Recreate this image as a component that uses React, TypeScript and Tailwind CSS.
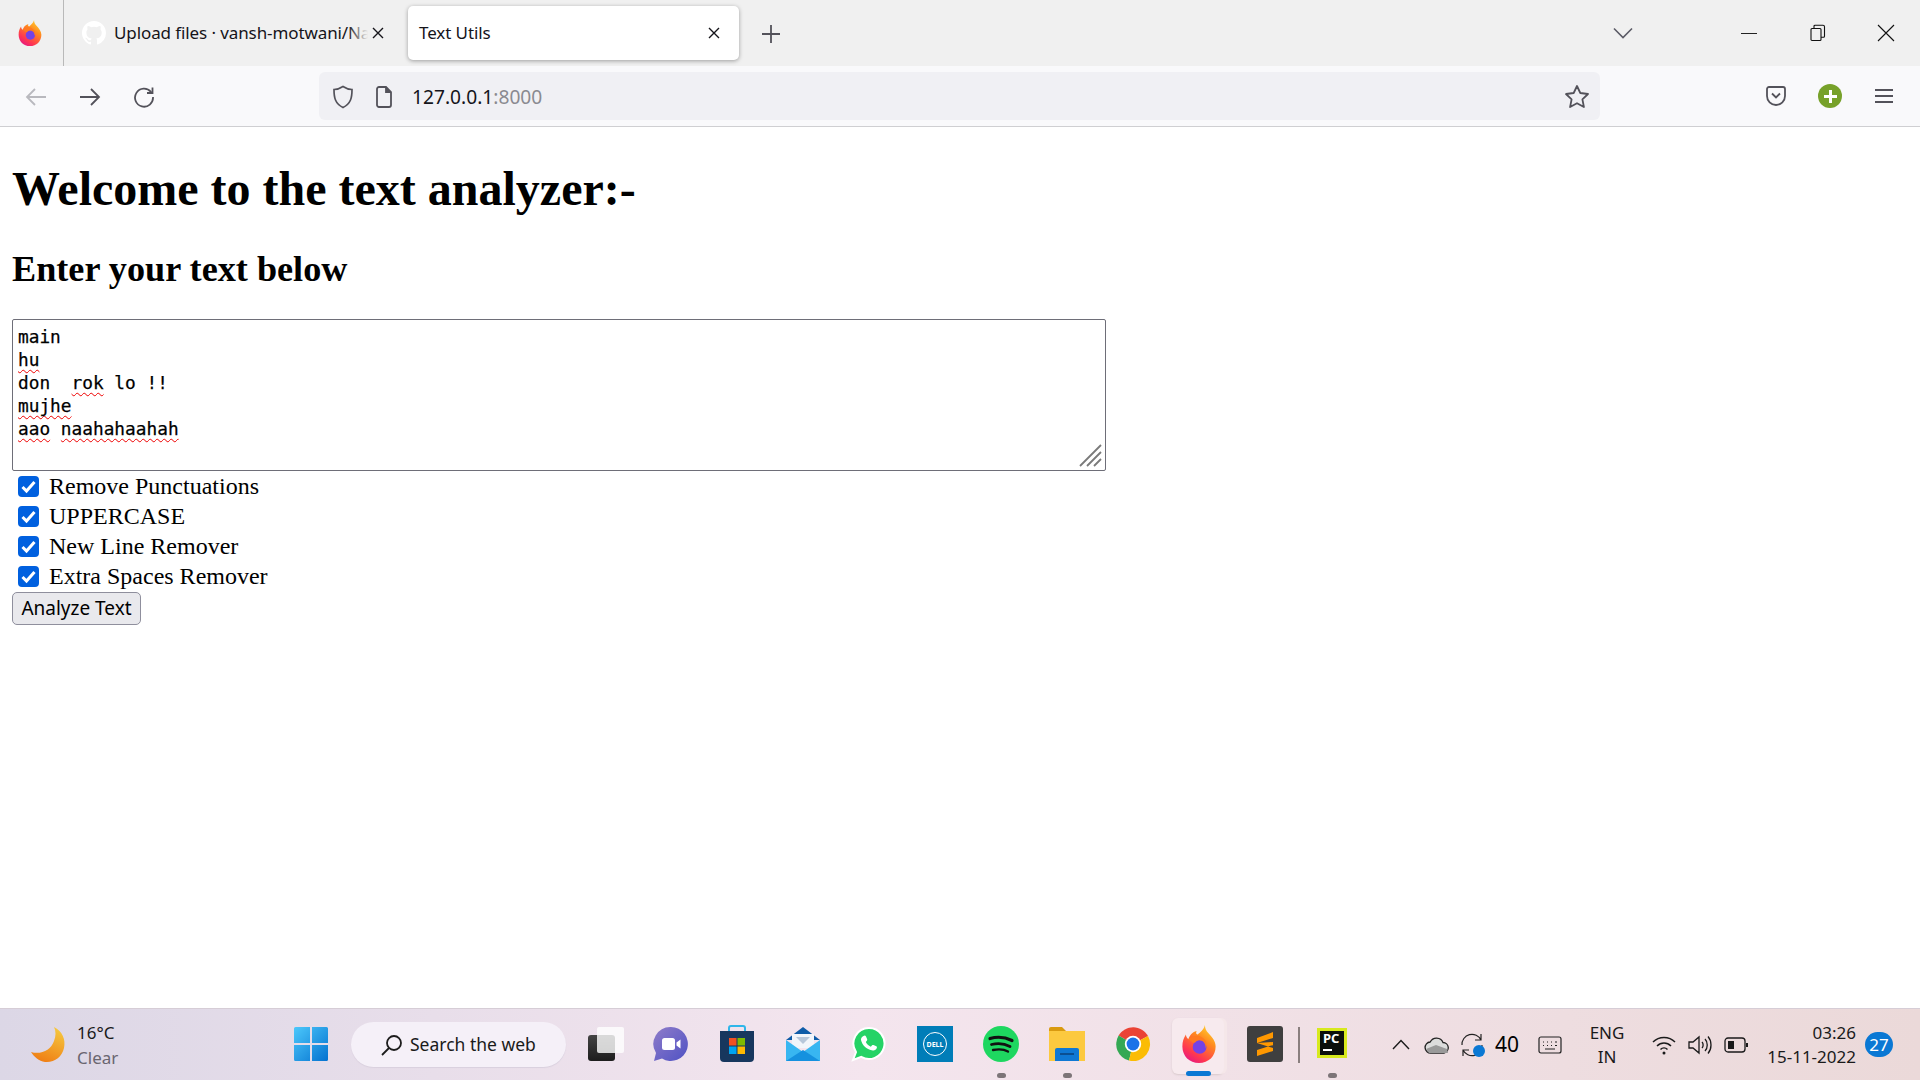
import React from "react";

const ui = "font-['Noto_Sans','Open_Sans',sans-serif]";

function Firefox({ s = 24 }: { s?: number }) {
  const id = "ff" + s;
  return (
    <svg width={s} height={s} viewBox="0 0 32 32">
      <defs>
        <linearGradient id={id} x1="0.8" y1="0" x2="0.2" y2="1">
          <stop offset="0" stopColor="#ffd52e" />
          <stop offset="0.35" stopColor="#ff8a1f" />
          <stop offset="0.75" stopColor="#ff3750" />
          <stop offset="1" stopColor="#e31587" />
        </linearGradient>
      </defs>
      <path d="M21 0c0 3 1 5 3 7 3 3 6 7 6 11 0 8-6 14-14 14S2 26 2 18c0-4 1-7 3-10 0 2 1 3 2 4 1-3 3-6 7-7-1 2 0 3 1 3 2-2 5-4 6-8z" fill={`url(#${id})`} />
      <circle cx="16.5" cy="18.500" r="5.800" fill="#7542e5" />
      <path d="M7 12c3-3 8-4 11-2 4 2 5.500 6 3.500 9.500 .5-4.500-3-7.500-6.500-6.500-2 1-2 2-4 2l-4-3z" fill="#ff7a1f" />
    </svg>
  );
}

function Chrome() {
  return (
    <svg width="36" height="36" viewBox="0 0 36 36">
      <path d="M18 18 L3.6 9.5 A17 17 0 0 1 33 10 Z" fill="#ea4335" />
      <path d="M18 18 L3.6 9.5 A17 17 0 0 0 14 34.6 Z" fill="#34a853" />
      <path d="M18 18 L33 10 A17 17 0 0 1 14 34.6 Z" fill="#fbbc04" />
      <circle cx="18" cy="18" r="8.2" fill="#fff" />
      <circle cx="18" cy="18" r="6.4" fill="#1a73e8" />
    </svg>
  );
}

function TaskIcon({ children, dot, active }: { children: React.ReactNode; dot?: boolean; active?: boolean }) {
  return (
    <div className="relative w-[66px] h-[71px] shrink-0 flex items-center justify-center">
      {active && <div className="absolute left-[6px] top-[9px] w-[52px] h-[56px] rounded-md bg-[#f7eaee] shadow-[3px_0_0_#f5e7e9,0_1px_2px_#d9c9cc]" />}
      <div className="relative -mt-[1px]">{children}</div>
      {dot && <div className="absolute bottom-[2px] left-[29px] w-[9px] h-[5px] rounded-full bg-[#7d7578]" />}
      {active && <div className="absolute bottom-[4px] left-[20px] w-[25px] h-[5px] rounded-full bg-[#0a78d4]" />}
    </div>
  );
}

function Sp({ children }: { children: React.ReactNode }) {
  return <span className="underline decoration-wavy decoration-[#ee0000] decoration-1 underline-offset-[3px] [text-decoration-skip-ink:none]">{children}</span>;
}

export default function App() {
  return (
    <div className="h-screen w-full flex flex-col bg-white overflow-hidden">
      {/* tab strip */}
      <div className={`${ui} h-[66px] shrink-0 bg-[#f0f0f0] flex items-start text-[#15141a]`}>
        <div className="w-[64px] h-full shrink-0 flex items-center justify-center pr-[4px] border-r border-[#b9b9b9]">
          <Firefox s={26} />
        </div>
        <div className="w-[344px] h-full flex items-center pl-[18px] shrink-0">
          <svg width="24" height="24" viewBox="0 0 16 16" className="shrink-0" fill="#ffffff">
            <path d="M8 0C3.58 0 0 3.58 0 8c0 3.54 2.29 6.53 5.47 7.59.4.07.55-.17.55-.38v-1.34c-2.23.48-2.69-1.07-2.69-1.07-.36-.92-.89-1.17-.89-1.17-.73-.5.05-.49.05-.49.8.06 1.23.83 1.23.83.71 1.22 1.87.87 2.33.66.07-.52.28-.87.5-1.07-1.78-.2-3.64-.89-3.64-3.95 0-.87.31-1.59.82-2.15-.08-.2-.36-1.02.08-2.12 0 0 .67-.21 2.2.82a7.7 7.7 0 0 1 4 0c1.53-1.04 2.2-.82 2.2-.82.44 1.1.16 1.92.08 2.12.51.56.82 1.27.82 2.15 0 3.07-1.87 3.75-3.65 3.95.29.25.54.73.54 1.48v2.2c0 .21.15.46.55.38A8.01 8.01 0 0 0 16 8c0-4.42-3.58-8-8-8z" />
          </svg>
          <div className="relative ml-[8px] w-[254px] overflow-hidden whitespace-nowrap text-[17px] tracking-[-0.1px] leading-[24px]">
            Upload files · vansh-motwani/Na
            <div className="absolute right-0 top-0 h-full w-[20px] bg-gradient-to-r from-transparent to-[#f0f0f0]" />
          </div>
          <svg width="14" height="14" viewBox="0 0 14 14" className="ml-[3px]" stroke="#15141a" strokeWidth="1.4"><path d="M2 2l10 10M12 2L2 12" /></svg>
        </div>
        <div className="w-[331px] h-[54px] mt-[6px] shrink-0 bg-white rounded-[5px] shadow-[0_1px_4px_rgba(0,0,0,0.35)] flex items-center justify-between pl-[11px] pr-[18px] text-[17px] tracking-[-0.1px]">
          <span>Text Utils</span>
          <svg width="14" height="14" viewBox="0 0 14 14" stroke="#15141a" strokeWidth="1.4"><path d="M2 2l10 10M12 2L2 12" /></svg>
        </div>
        <div className="w-[64px] h-full flex items-center justify-center shrink-0 pt-[2px]">
          <svg width="20" height="20" viewBox="0 0 20 20" stroke="#53525a" strokeWidth="1.8"><path d="M10 1v18M1 10h18" /></svg>
        </div>
        <div className="flex-1 h-full flex items-center justify-end">
          <svg width="20" height="12" viewBox="0 0 20 12" fill="none" stroke="#5b5b66" strokeWidth="1.6" className="mr-[108px]"><path d="M1 1.5l9 9 9-9" /></svg>
          <div className="w-[16px] h-[1px] bg-[#222] mr-[53px]" />
          <svg width="16" height="18" viewBox="0 0 16 18" fill="none" stroke="#111" strokeWidth="1.1" className="mr-[51px]"><rect x="1" y="4.5" width="10" height="12" rx="1" /><path d="M4 4.5V2.2a1 1 0 0 1 1-1h8a1.5 1.5 0 0 1 1.5 1.5v9.5a1 1 0 0 1-1 1H11" /></svg>
          <svg width="18" height="18" viewBox="0 0 18 18" stroke="#111" strokeWidth="1.1" className="mr-[25px]"><path d="M1 1l16 16M17 1L1 17" /></svg>
        </div>
      </div>

      {/* toolbar */}
      <div className={`${ui} h-[61px] shrink-0 bg-[#f9f9fb] border-b border-[#cfcfd2] flex items-start text-[#15141a]`}>
        <div className="w-[319px] h-[60px] shrink-0 flex items-center pl-[25px] pt-[2px]">
          <svg width="22" height="20" viewBox="0 0 22 20" fill="none" stroke="#b9b9be" strokeWidth="1.8"><path d="M21 10H2M10 2l-8 8 8 8" /></svg>
          <svg width="22" height="20" viewBox="0 0 22 20" fill="none" stroke="#53525a" strokeWidth="1.8" className="ml-[32px]"><path d="M1 10h19M12 2l8 8-8 8" /></svg>
          <svg width="22" height="22" viewBox="0 0 22 22" fill="none" stroke="#53525a" strokeWidth="1.8" className="ml-[32px]"><path d="M18 6a9 9 0 1 0 2 5M19.5 1.5V7H14" /></svg>
        </div>
        <div className="w-[1281px] h-[48px] mt-[6px] shrink-0 rounded-md bg-[#f0f0f4] flex items-center pl-[13px] pr-[10px] pt-[2px]">
          <svg width="22" height="24" viewBox="0 0 22 24" fill="none" stroke="#53525a" strokeWidth="1.7"><path d="M11 1.5c3 2 6 3 9 3 0 8-1 14-9 18C3 18.500 2 12.500 2 4.500c3 0 6-1 9-3z" /></svg>
          <svg width="18" height="22" viewBox="0 0 18 22" fill="none" stroke="#53525a" strokeWidth="1.8" className="ml-[21px]"><path d="M2 3a2 2 0 0 1 2-2h7l5 5v13a2 2 0 0 1-2 2H4a2 2 0 0 1-2-2z" /><path d="M11 1v5h5" fill="#53525a" /></svg>
          <span className="ml-[19px] text-[19.200px] leading-none">127.0.0.1<span className="text-[#8a8a90]">:8000</span></span>
          <svg width="26" height="26" viewBox="0 0 26 26" fill="none" stroke="#53525a" strokeWidth="1.8" className="ml-auto"><path d="M13 2l3.300 7 7.700 1-5.600 5.300 1.500 7.700-6.900-3.800L6.100 23l1.500-7.700L2 10l7.700-1z" strokeLinejoin="round" /></svg>
        </div>
        <div className="flex-1 h-[60px] flex items-center pl-[165px]">
          <svg width="22" height="22" viewBox="0 0 22 22" fill="none" stroke="#53525a" strokeWidth="1.8"><path d="M2 4a2 2 0 0 1 2-2h14a2 2 0 0 1 2 2v7a9 9 0 0 1-18 0z" /><path d="M7 8.500l4 4 4-4" /></svg>
          <div className="ml-[31px] w-[24px] h-[24px] rounded-full bg-[#77a12a] flex items-center justify-center">
            <svg width="13" height="13" viewBox="0 0 13 13" stroke="#fff" strokeWidth="3"><path d="M6.500 0v13M0 6.500h13" /></svg>
          </div>
          <svg width="20" height="18" viewBox="0 0 20 18" stroke="#53525a" strokeWidth="1.8" className="ml-[32px]"><path d="M1 3h18M1 9h18M1 15h18" /></svg>
        </div>
      </div>

      {/* page */}
      <main className="flex-1 min-h-0 px-[12px] font-['Liberation_Serif',serif] text-black">
        <h1 className="mt-[34px] text-[48px] leading-[56px] font-bold">Welcome to the text analyzer:-</h1>
        <h2 className="mt-[32px] text-[36.200px] leading-[40px] font-bold">Enter your text below</h2>
        <div className="relative mt-[30px] w-[1094px] h-[152px] border border-[#6e6e78] rounded-[2px] px-[5px] py-[5px] font-['DejaVu_Sans_Mono',monospace] text-[17.800px] leading-[23px] whitespace-pre [-webkit-text-stroke:0.25px_#000]">
          <div>main</div>
          <div><Sp>hu</Sp></div>
          <div>don  <Sp>rok</Sp> lo !!</div>
          <div><Sp>mujhe</Sp></div>
          <div><Sp>aao</Sp> <Sp>naahahaahah</Sp></div>
          <svg width="24" height="24" viewBox="0 0 24 24" stroke="#7a7a7a" strokeWidth="1.8" className="absolute right-[3px] bottom-[3px]"><path d="M2 23L23 2M9 23L23 9M16 23l7-7" /></svg>
        </div>
        <div className="flex flex-col">
          {["Remove Punctuations", "UPPERCASE", "New Line Remover", "Extra Spaces Remover"].map((t) => (
            <label key={t} className="h-[30px] flex items-center text-[24px] leading-[30px]">
              <span className="ml-[6px] w-[21px] h-[21px] rounded-[4px] bg-[#0060df] flex items-center justify-center">
                <svg width="15" height="15" viewBox="0 0 15 15" fill="none" stroke="#fff" strokeWidth="3"><path d="M1.500 8l4 4 8-9" /></svg>
              </span>
              <span className="ml-[10px]">{t}</span>
            </label>
          ))}
        </div>
        <button className={`${ui} mt-[1px] block w-[129px] h-[33px] rounded-[5px] border border-[#8f8f9d] bg-[#e9e9ed] text-[19px] leading-none text-black`}>Analyze Text</button>
      </main>

      {/* taskbar */}
      <div className={`${ui} h-[72px] shrink-0 border-t border-[#d6cdd6] bg-gradient-to-r from-[#dcd7e6] via-[#f4e5ee] via-45% to-[#ebd9d9] flex items-center text-[#1a1a1a]`}>
        <div className="w-[278px] h-full shrink-0 flex items-center pl-[30px]">
          <svg width="38" height="40" viewBox="0 0 38 40">
            <defs><linearGradient id="moon" x1="0.7" y1="0" x2="0.3" y2="1"><stop offset="0" stopColor="#f5c73e" /><stop offset="1" stopColor="#ef7d14" /></linearGradient></defs>
            <path d="M24 2c8 4 12 12 10 21-2 9-10 15-19 14C9 36 4 32 1 27c10 3 20-2 23-11 2-5 2-10 0-14z" fill="url(#moon)" />
          </svg>
          <div className="ml-[9px] flex flex-col text-[17px] leading-[25px]">
            <span>16°C</span>
            <span className="text-[#6a6670]">Clear</span>
          </div>
        </div>
        <TaskIcon>
          <svg width="36" height="36" viewBox="0 0 36 36">
            <defs><linearGradient id="win" x1="0" y1="0" x2="1" y2="1"><stop offset="0" stopColor="#4cc8fb" /><stop offset="1" stopColor="#0472d0" /></linearGradient></defs>
            <path d="M1 2.500A1.500 1.500 0 0 1 2.500 1H17v16H1zM19 1h14.500A1.500 1.500 0 0 1 35 2.500V17H19zM1 19h16v16H2.500A1.500 1.500 0 0 1 1 33.500zM19 19h16v14.500a1.500 1.500 0 0 1-1.500 1.500H19z" fill="url(#win)" />
          </svg>
        </TaskIcon>
        <div className="ml-[7px] w-[215px] h-[45px] shrink-0 rounded-full bg-[#f5f0f8] shadow-[0_1px_1px_#d9d0de] flex items-center pl-[30px] text-[17.500px]">
          <svg width="22" height="22" viewBox="0 0 22 22" fill="none" stroke="#1c1c1c" strokeWidth="1.800"><circle cx="13" cy="9" r="7" /><path d="M8 14l-7 7" /></svg>
          <span className="ml-[7px]">Search the web</span>
        </div>
        <div className="ml-[6px]">
          <TaskIcon>
            <div className="relative w-[36px] h-[34px] ml-[2px]">
              <div className="absolute left-0 bottom-0 w-[27px] h-[26px] rounded-[3px] bg-gradient-to-b from-[#444] to-[#1d1d1d]" />
              <div className="absolute right-0 top-0 w-[27px] h-[26px] rounded-[2px] bg-white/80" />
            </div>
          </TaskIcon>
        </div>
        <TaskIcon>
          <svg width="36" height="36" viewBox="0 0 36 36">
            <defs><linearGradient id="teams" x1="0" y1="0" x2="1" y2="1"><stop offset="0" stopColor="#8f7cc9" /><stop offset="1" stopColor="#4f52c4" /></linearGradient></defs>
            <path d="M18 1a17 17 0 1 1-9 31.500L1 35l2-8A17 17 0 0 1 18 1z" fill="url(#teams)" />
            <rect x="9" y="12" width="13" height="12" rx="2.500" fill="#fff" />
            <path d="M23.500 16.500l4-3v9l-4-3z" fill="#fff" />
          </svg>
        </TaskIcon>
        <TaskIcon>
          <svg width="36" height="38" viewBox="0 0 36 38">
            <path d="M10 6V3a2 2 0 0 1 2-2h12a2 2 0 0 1 2 2v3" fill="none" stroke="#2fb6ea" strokeWidth="2" />
            <path d="M1 6h34v27a4 4 0 0 1-4 4H5a4 4 0 0 1-4-4z" fill="#17375e" />
            <rect x="10" y="13" width="7.500" height="7.500" fill="#f25022" /><rect x="18.500" y="13" width="7.500" height="7.500" fill="#7fba00" />
            <rect x="10" y="21.500" width="7.500" height="7.500" fill="#00a4ef" /><rect x="18.500" y="21.500" width="7.500" height="7.500" fill="#ffb900" />
          </svg>
        </TaskIcon>
        <TaskIcon>
          <svg width="36" height="36" viewBox="0 0 36 36">
            <path d="M18 1L1 14h34z" fill="#0f5ca8" />
            <path d="M7 8h22v14H7z" fill="#f2f5fa" />
            <path d="M11 11h14l-7 7z" fill="#b7c7da" />
            <path d="M1 14l17 12 17-12v21H1z" fill="#38b6f1" />
            <path d="M1 35l17-11 17 11z" fill="#1591df" />
          </svg>
        </TaskIcon>
        <TaskIcon>
          <svg width="36" height="36" viewBox="0 0 36 36">
            <path d="M18 2a15.500 15.500 0 1 1-7.800 28.900L2 34l3-8A15.500 15.500 0 0 1 18 2z" fill="#25d366" stroke="#fff" strokeWidth="2" />
            <path d="M12.500 10c1-1 2-.6 2.500.5l1.200 2.700c.2.600 0 1-.4 1.500l-1 1.200c1 2 2.700 3.700 5 4.800l1.300-1.400c.4-.4.900-.5 1.400-.3l2.800 1.300c.6.300.8.900.5 1.700-.6 1.800-2.300 2.700-4 2.400C16 24 11 19 10 14c-.3-1.500.8-3 2.500-4z" fill="#fff" />
          </svg>
        </TaskIcon>
        <TaskIcon>
          <div className="w-[36px] h-[36px] bg-[#007db8] flex items-center justify-center">
            <div className="w-[24px] h-[24px] rounded-full border border-white flex items-center justify-center text-[7px] font-bold text-white leading-none">DELL</div>
          </div>
        </TaskIcon>
        <TaskIcon dot>
          <svg width="36" height="36" viewBox="0 0 36 36">
            <circle cx="18" cy="18" r="18" fill="#1ed760" />
            <g fill="none" stroke="#111" strokeLinecap="round"><path d="M7 12.500c7-2 15-1.500 22 2" strokeWidth="3.200" /><path d="M8.500 18.500c6-1.500 13-1 18.500 2" strokeWidth="2.800" /><path d="M10 24c5-1 11-.8 15 1.600" strokeWidth="2.300" /></g>
          </svg>
        </TaskIcon>
        <TaskIcon dot>
          <svg width="36" height="36" viewBox="0 0 36 36">
            <path d="M0 3a2 2 0 0 1 2-2h11l4 4H0z" fill="#d99a10" />
            <path d="M0 5h36v30H0z" fill="#fcc93f" />
            <path d="M6 24a2 2 0 0 1 2-2h20a2 2 0 0 1 2 2v11H6z" fill="#0f78d4" />
            <rect x="11" y="27" width="14" height="2" fill="#0b4f92" />
          </svg>
        </TaskIcon>
        <TaskIcon><Chrome /></TaskIcon>
        <TaskIcon active><Firefox s={38} /></TaskIcon>
        <TaskIcon>
          <div className="w-[36px] h-[36px] rounded-[3px] bg-[#3f3f3f] flex items-center justify-center">
            <svg width="20" height="26" viewBox="0 0 20 26" fill="#ff9800"><path d="M18 1v6L2 12V7zM2 12l16 5v-6zM18 14v6L2 25v-6z" /></svg>
          </div>
        </TaskIcon>
        <div className="w-[1.500px] h-[36px] bg-[#8a7f7f] shrink-0" />
        <div className="-ml-[0.500px]">
          <TaskIcon dot>
            <div className="w-[30px] h-[30px] mt-[-2px] mx-auto border-[3px] border-[#d7e91e] bg-[#0b0f0b] text-white text-[13px] font-bold leading-[15px] pl-[3px]">PC<div className="w-[9px] h-[2px] bg-white mt-[3px]" /></div>
          </TaskIcon>
        </div>
        <div className="flex-1" />
        <div className="h-full flex items-center pr-[27px] shrink-0">
          <svg width="18" height="11" viewBox="0 0 18 11" fill="none" stroke="#1a1a1a" strokeWidth="1.400"><path d="M1 10l8-8.500 8 8.500" /></svg>
          <svg width="26" height="18" viewBox="0 0 26 18" className="ml-[14px]"><path d="M7 17a5.500 5.500 0 0 1-.8-11A7 7 0 0 1 19 6.500 5.300 5.300 0 0 1 20 17z" fill="#dcdcdc" stroke="#222" strokeWidth="1.300" /><path d="M2 13l10-4 11 4 1 4H5z" fill="#9a9a9a" /></svg>
          <div className="relative ml-[9px] w-[26px] h-[26px]">
            <svg width="26" height="26" viewBox="0 0 26 26" fill="none" stroke="#222" strokeWidth="1.200"><path d="M3 13A10 10 0 0 1 22 8M22 2v6h-6M23 13a10 10 0 0 1-19 5M4 24v-6h6" /></svg>
            <div className="absolute right-0 bottom-[1px] w-[12px] h-[12px] rounded-full bg-[#0a78d4]" />
          </div>
          <span className="ml-[10px] w-[28px] text-[21px] leading-none text-black">40</span>
          <svg width="24" height="18" viewBox="0 0 24 18" fill="none" stroke="#222" strokeWidth="1.200" className="ml-[15px]"><rect x="1" y="1" width="22" height="16" rx="2" /><path d="M5 6h1M9 6h1M13 6h1M17 6h2M5 9.500h1M9 9.500h1M13 9.500h1M17 9.500h2M7 13h10" /></svg>
          <div className="ml-[20px] w-[50px] flex flex-col items-center text-[17px] leading-[24px]">
            <span>ENG</span><span>IN</span>
          </div>
          <svg width="24" height="20" viewBox="0 0 24 20" fill="none" stroke="#1a1a1a" strokeWidth="1.500" className="ml-[20px]"><path d="M1 7c6-6 16-6 22 0M5 11c4-4 10-4 14 0M8.500 14.500c2-2 5-2 7 0" /><circle cx="12" cy="18" r="1.500" fill="#1a1a1a" stroke="none" /></svg>
          <svg width="24" height="22" viewBox="0 0 24 22" fill="none" stroke="#1a1a1a" strokeWidth="1.300" className="ml-[12px]"><path d="M1 8v6h4l6 5V3L5 8zM14 8c1.500 1.500 1.500 4.500 0 6M17 5c3 3 3 9 0 12M20 2.500c4 4.500 4 12.500 0 17" /></svg>
          <svg width="24" height="16" viewBox="0 0 24 16" fill="none" stroke="#1a1a1a" strokeWidth="1.300" className="ml-[12px]"><rect x="1" y="1" width="20" height="14" rx="3" /><rect x="4" y="4" width="6" height="8" fill="#1a1a1a" stroke="none" /><rect x="22" y="6" width="2" height="4" fill="#1a1a1a" stroke="none" /></svg>
          <div className="ml-[20px] w-[88px] flex flex-col items-end text-[17px] leading-[24px] whitespace-nowrap">
            <span>03:26</span><span>15-11-2022</span>
          </div>
          <div className="ml-[9px] w-[28px] h-[25px] rounded-full bg-[#0a78d4] text-white text-[17px] leading-none flex items-center justify-center">27</div>
        </div>
      </div>
    </div>
  );
}
